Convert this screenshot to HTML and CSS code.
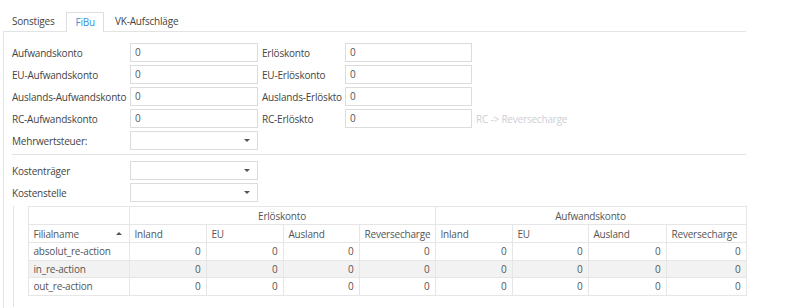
FILE: index.html
```html
<!DOCTYPE html>
<html lang="de">
<head>
    <meta charset="UTF-8">
    <title>Filiale - FiBu</title>
    <link rel="stylesheet" href="styles.css">
</head>
<body>
    <!-- Reiter -->
    <div class="tabs">
        <div class="tab">Sonstiges</div>
        <div class="tab active">FiBu</div>
        <div class="tab">VK-Aufschläge</div>
    </div>

    <div class="panel">
        <!-- Konten -->
        <div class="form-grid">
            <label>Aufwandskonto</label>
            <div class="field">0</div>
            <label class="right-label">Erlöskonto</label>
            <div class="field">0</div>
            <span></span>

            <label>EU-Aufwandskonto</label>
            <div class="field">0</div>
            <label class="right-label">EU-Erlöskonto</label>
            <div class="field">0</div>
            <span></span>

            <label>Auslands-Aufwandskonto</label>
            <div class="field">0</div>
            <label class="right-label">Auslands-Erlöskto</label>
            <div class="field">0</div>
            <span></span>

            <label>RC-Aufwandskonto</label>
            <div class="field">0</div>
            <label class="right-label">RC-Erlöskto</label>
            <div class="field">0</div>
            <span class="hint">RC -&gt; Reversecharge</span>

            <label>Mehrwertsteuer:</label>
            <div class="field combo"><span class="arrow"></span></div>
        </div>

        <div class="separator"></div>

        <div class="form-grid short">
            <label>Kostenträger</label>
            <div class="field combo"><span class="arrow"></span></div>
            <label>Kostenstelle</label>
            <div class="field combo"><span class="arrow"></span></div>
        </div>

        <!-- Filialen -->
        <div class="grid-wrap">
            <table class="data-grid">
                <colgroup>
                    <col style="width: 14px">
                    <col style="width: 101px">
                    <col style="width: 77px">
                    <col style="width: 77px">
                    <col style="width: 76px">
                    <col style="width: 76px">
                    <col style="width: 77px">
                    <col style="width: 76px">
                    <col style="width: 78px">
                    <col style="width: 80px">
                </colgroup>
                <thead>
                    <tr class="group-row">
                        <th class="indicator"></th>
                        <th></th>
                        <th colspan="4" class="group">Erlöskonto</th>
                        <th colspan="4" class="group">Aufwandskonto</th>
                    </tr>
                    <tr>
                        <th class="indicator"></th>
                        <th class="sortable">Filialname <span class="sort-up"></span></th>
                        <th>Inland</th>
                        <th>EU</th>
                        <th>Ausland</th>
                        <th>Reversecharge</th>
                        <th>Inland</th>
                        <th>EU</th>
                        <th>Ausland</th>
                        <th>Reversecharge</th>
                    </tr>
                </thead>
                <tbody id="rows"></tbody>
            </table>
        </div>
    </div>

    <script>
        // Filialen mit Konten (Erlös + Aufwand)
        const filialen = [
            { name: 'absolut_re-action', werte: [0, 0, 0, 0, 0, 0, 0, 0] },
            { name: 'in_re-action', werte: [0, 0, 0, 0, 0, 0, 0, 0] },
            { name: 'out_re-action', werte: [0, 0, 0, 0, 0, 0, 0, 0] }
        ];

        const tbody = document.getElementById('rows');
        filialen.forEach((f) => {
            const tr = document.createElement('tr');
            tr.innerHTML = `<td class="indicator"></td><td>${f.name}</td>` +
                f.werte.map(w => `<td class="num">${w}</td>`).join('');
            tbody.appendChild(tr);
        });
    </script>
</body>
</html>
```

FILE: styles.css
```css
body {
    margin: 0;
    height: 308px;
    overflow: hidden;
    background: #fff;
    font-family: 'Open Sans', sans-serif;
    font-size: 10px;
    letter-spacing: -0.2px;
    color: #444;
}

/* Reiter */
.tabs {
    display: flex;
    margin-top: 12px;
    padding-left: 3px;
}

.tab {
    height: 18px;
    line-height: 18px;
    padding: 0 11px 0 9px;
    color: #444;
}

.tab.active {
    height: 19px;
    margin-bottom: -1px;
    padding: 0 8px 0 9px;
    border: 1px solid #dedede;
    border-bottom: none;
    background: #fff;
    color: #3b8fd9;
}

.tab.active + .tab {
    padding-left: 11px;
}

.panel {
    margin-left: 3px;
    width: 734px;
    height: 266px;
    padding: 11px 0 0 8px;
    border-top: 1px solid #e3e3e3;
    border-left: 1px solid #e3e3e3;
}

/* Formular */
.form-grid {
    display: grid;
    grid-template-columns: 118px 128px 87px 127px auto;
    grid-auto-rows: 19px;
    row-gap: 3px;
    align-items: center;
}

.form-grid.short {
    grid-template-columns: 118px 128px;
}

.form-grid label {
    white-space: nowrap;
    color: #444;
}

.right-label {
    padding-left: 4px;
}

.field {
    box-sizing: border-box;
    height: 19px;
    line-height: 17px;
    padding-left: 4px;
    border: 1px solid #dcdcdc;
    color: #555;
    background: #fff;
}

.combo {
    display: flex;
    justify-content: flex-end;
    align-items: center;
    padding-right: 7px;
}

.arrow {
    width: 0;
    height: 0;
    border-left: 3px solid transparent;
    border-right: 3px solid transparent;
    border-top: 3px solid #555;
}

.hint {
    padding-left: 4px;
    color: #cfcfcf;
    white-space: nowrap;
}

.separator {
    height: 1px;
    margin: 4px 0 6px;
    background: #e3e3e3;
}

/* Tabelle */
.grid-wrap {
    margin: 4px 0 0 1px;
    height: 101px;
    border-left: 1px solid #e3e3e3;
}

.data-grid {
    table-layout: fixed;
    border-collapse: collapse;
    width: 732px;
}

.data-grid th,
.data-grid td {
    height: 17px;
    padding: 0 5px;
    border-top: 1px solid #e6e6e6;
    border-right: 1px solid #e6e6e6;
    border-bottom: 1px solid #e6e6e6;
    font-weight: normal;
    text-align: left;
    white-space: nowrap;
    overflow: hidden;
    color: #555;
}

.data-grid td {
    height: 16.5px;
}

.data-grid .indicator {
    padding: 0;
    border-top: none;
    border-bottom: none;
}

.data-grid .group {
    text-align: center;
}

.data-grid td.num {
    text-align: right;
}

.data-grid tbody tr:nth-child(2) td {
    background: #f2f2f2;
}

.data-grid tbody tr:nth-child(2) td.indicator {
    background: #fff;
}

.sortable {
    position: relative;
}

.sort-up {
    position: absolute;
    right: 7px;
    top: 7px;
    width: 0;
    height: 0;
    border-left: 3px solid transparent;
    border-right: 3px solid transparent;
    border-bottom: 3px solid #555;
}
```
